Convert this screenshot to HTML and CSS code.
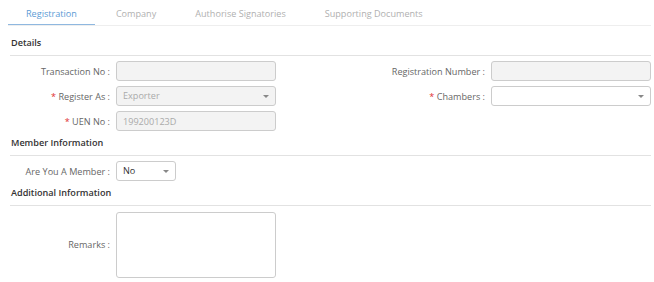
FILE: index.html
```html
<!DOCTYPE html>
<html lang="en">
<head>
  <meta charset="UTF-8">
  <title>Registration</title>
  <link rel="stylesheet" href="styles.css">
</head>
<body>
  <div class="page">
    <!-- Tabs -->
    <ul class="tabs">
      <li class="tab active">Registration</li>
      <li class="tab">Company</li>
      <li class="tab">Authorise Signatories</li>
      <li class="tab">Supporting Documents</li>
    </ul>

    <!-- Details -->
    <h3 class="section-title first">Details</h3>
    <div class="form-grid">
      <label class="field-label">Transaction No :</label>
      <input class="field-input" type="text" disabled>
      <label class="field-label">Registration Number :</label>
      <input class="field-input" type="text" disabled>

      <label class="field-label"><span class="req">*</span> Register As :</label>
      <div class="select disabled"><span class="select-value">Exporter</span><span class="caret"></span></div>
      <label class="field-label"><span class="req">*</span> Chambers :</label>
      <div class="select"><span class="select-value"></span><span class="caret"></span></div>

      <label class="field-label"><span class="req">*</span> UEN No :</label>
      <input class="field-input" type="text" value="199200123D" disabled>
    </div>

    <!-- Member Information -->
    <h3 class="section-title">Member Information</h3>
    <div class="form-grid">
      <label class="field-label">Are You A Member :</label>
      <div class="select small"><span class="select-value dark">No</span><span class="caret"></span></div>
    </div>

    <!-- Additional Information -->
    <h3 class="section-title">Additional Information</h3>
    <div class="form-grid">
      <label class="field-label">Remarks :</label>
      <textarea class="field-textarea"></textarea>
    </div>
  </div>
</body>
</html>
```

FILE: styles.css
```css
/* Registration form */
body {
  margin: 0;
  font-family: "Open Sans", Arial, sans-serif;
  font-size: 9.1px;
  color: #555;
  background: #fff;
}

.page {
  padding: 0 3px 0 8px;
}

.tabs {
  display: flex;
  list-style: none;
  margin: 0;
  padding: 0;
  border-bottom: 1px solid #eee;
}

.tab {
  padding: 8px 18px 5px;
  margin-right: 3px;
  color: #b0b0b0;
  line-height: 12px;
}

.tab.active {
  color: #5b9bd5;
  border-bottom: 1px solid #8fb8e0;
  padding-bottom: 4px;
}

.section-title {
  margin: 0 0 0 2px;
  padding: 6px 1px 6px;
  font-size: 9.1px;
  font-weight: 600;
  color: #333;
  line-height: 12px;
  border-bottom: 1px solid #e2e2e2;
}

.section-title.first {
  padding-top: 11px;
}

.form-grid {
  display: grid;
  grid-template-columns: 100px 160px 1fr 160px;
  column-gap: 6px;
  row-gap: 5px;
  padding: 5px 0 0 2px;
  align-items: center;
}

.field-label {
  text-align: right;
  color: #666;
}

.req {
  color: #e03030;
}

.field-input,
.select,
.field-textarea {
  box-sizing: border-box;
  height: 20px;
  border: 1px solid #ccc;
  border-radius: 3px;
  font-family: inherit;
  font-size: 9.1px;
  color: #aaa;
  padding: 0 6px;
  margin: 0;
  background: #fff;
}

.field-input:disabled,
.select.disabled {
  background: #f3f3f3;
}

.select {
  display: flex;
  align-items: center;
  justify-content: space-between;
}

.select.small {
  width: 60px;
}

.select-value {
  margin-top: -2px;
}

.select-value.dark {
  color: #333;
}

.caret {
  width: 0;
  height: 0;
  border-left: 3px solid transparent;
  border-right: 3px solid transparent;
  border-top: 3px solid #888;
}

.field-textarea {
  height: 66px;
  resize: none;
  margin-top: 1px;
}
```
